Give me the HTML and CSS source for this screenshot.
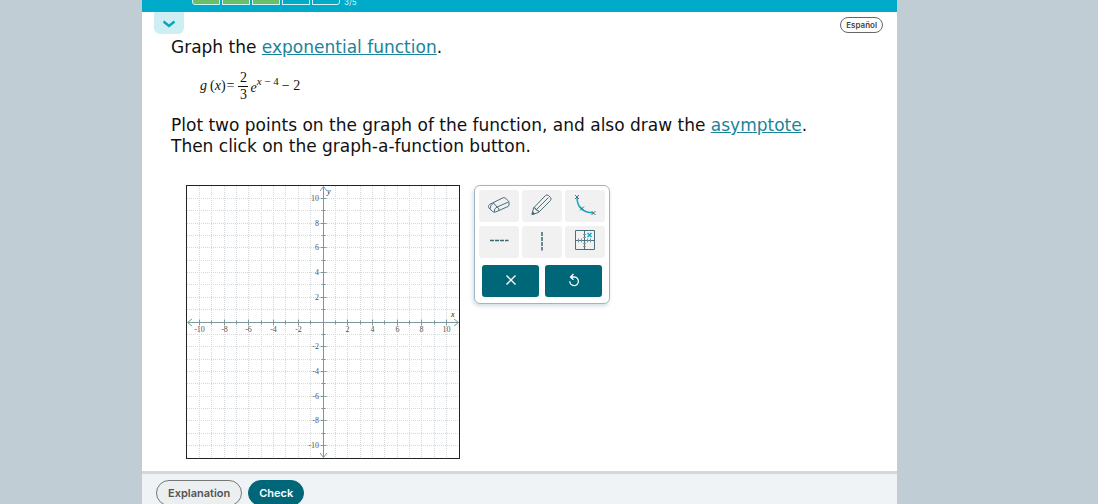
FILE: index.html
```
<!DOCTYPE html>
<html lang="en">
<head>
    <meta charset="UTF-8">
    <meta name="viewport" content="width=device-width, initial-scale=1.0">
    <title>Graphing an exponential function</title>
    <link rel="stylesheet" href="styles.css">
</head>
<body>
    <div class="app">
        <header class="topbar">
            <div class="progress">
                <span class="step done"></span>
                <span class="step done"></span>
                <span class="step done"></span>
                <span class="step"></span>
                <span class="step"></span>
            </div>
            <span class="count">3/5</span>
        </header>

        <main class="content">
            <div class="tabs">
                <button class="collapse" type="button" aria-label="Show details">
                    <svg width="14" height="8" viewBox="0 0 14 8"><path d="M1.500 1.500 L7 6 L12.500 1.500"/></svg>
                </button>
                <button class="language" type="button">Español</button>
            </div>

            <div class="question">
                <p>Graph the <a href="#exponential">exponential function</a>.</p>
                <div class="formula">
                    <i>g</i><span class="arg">(<i>x</i>)</span><span class="equals">=</span>
                    <span class="fraction"><span class="top">2</span><span>3</span></span>
                    <span class="power"><i>e</i><sup><i>x</i> − 4</sup></span>
                    <span class="rest">− 2</span>
                </div>
                <p>Plot two points on the graph of the function, and also draw the <a href="#asymptote">asymptote</a>.<br>
                Then click on the graph-a-function button.</p>
            </div>

            <div class="workspace">
                <svg class="graph" id="graph" width="274" height="274" viewBox="0 0 274 274" role="img" aria-label="Coordinate plane">
                    <g id="grid"></g>
                    <path class="axis" d="M2 137.500 H272 M137.500 2 V272"/>
                    <path class="axis" d="M6 134 L1.500 137.500 L6 141 M268 134 L272.500 137.500 L268 141 M134 6 L137.500 1.500 L141 6 M134 268 L137.500 272.500 L141 268"/>
                    <g id="ticks"></g>
                    <text class="name" x="141" y="9">y</text>
                    <text class="name" x="265" y="132">x</text>
                    <rect class="frame" x="0.500" y="0.500" width="273" height="273"/>
                </svg>

                <div class="toolbox">
                    <div class="tools">
                        <button type="button" aria-label="Eraser">
                            <svg width="24" height="24" viewBox="0 0 24 24">
                                <path d="M2.500 11.500 L15.500 5 Q17 4.300 18.200 5 L21.500 8 Q22 8.500 22 9.500 V12 Q22 13 21 13.500 L8.500 19 Q7 19.600 5.800 18.600 L2.800 16 Q1.500 15 1.500 13.500 Q1.500 12 2.500 11.500 Z"/>
                                <path d="M7.500 19 Q6.500 15.500 10 14 L21.500 9 M10 14 L6.500 10 M10 14 Q12 14.500 12 17.200 M3 16 Q3 12.500 6.500 10"/>
                            </svg>
                        </button>
                        <button type="button" aria-label="Pencil">
                            <svg width="24" height="24" viewBox="0 0 24 24">
                                <path d="M2 21.500 L3.500 15 L15.500 2.500 Q17 1.300 18.500 2.500 L20.500 4.500 Q21.800 6 20.500 7.500 L8.500 19.500 Z M3.500 15 Q6 14 6 17 Q9 16.500 8.500 19.500 M6 17 L18.500 4.500"/>
                                <path class="solid" d="M2 21.500 L2.600 18.800 L4.700 20.800 Z"/>
                            </svg>
                        </button>
                        <button type="button" aria-label="Curve">
                            <svg width="24" height="24" viewBox="0 0 24 24">
                                <path class="accent" d="M4 4 C4 15 10 19.500 20.500 20"/>
                                <path d="M2 2 L6 6 M6 2 L2 6 M7 13.500 L11 17.500 M11 13.500 L7 17.500 M18.500 18 L22.500 22 M22.500 18 L18.500 22"/>
                            </svg>
                        </button>
                        <button type="button" aria-label="Horizontal asymptote">
                            <svg width="24" height="24" viewBox="0 0 24 24"><path class="dash" d="M3 11.500 H21.500"/></svg>
                        </button>
                        <button type="button" aria-label="Vertical asymptote">
                            <svg width="24" height="24" viewBox="0 0 24 24"><path class="dash" d="M12 3 V21.500"/></svg>
                        </button>
                        <button type="button" aria-label="Graph a function">
                            <svg width="24" height="24" viewBox="0 0 24 24">
                                <path d="M2.500 1.500 H21.500 V20.500 H2.500 Z M2.500 11.500 H21.500 M11.500 1.500 V20.500"/>
                                <path class="thin" d="M5.500 9.500 V13.500 M8.500 9.500 V13.500 M14.500 9.500 V13.500 M17.500 9.500 V13.500 M10 5.500 H13 M10 8.500 H13 M10 14.500 H13 M10 17.500 H13"/>
                                <path class="accent" d="M14.500 4 L18.500 8 M18.500 4 L14.500 8"/>
                            </svg>
                        </button>
                    </div>
                    <div class="actions">
                        <button type="button" aria-label="Clear">
                            <svg width="16" height="16" viewBox="0 0 16 16"><path d="M3.500 2.500 L12.500 11.500 M12.500 2.500 L3.500 11.500"/></svg>
                        </button>
                        <button type="button" aria-label="Undo">
                            <svg width="16" height="16" viewBox="0 0 16 16"><path d="M4.500 4 H8.500 A4.300 4.300 0 1 1 3.800 8.300 M7.500 1 L4.500 4 L7.500 6.800"/></svg>
                        </button>
                    </div>
                </div>
            </div>
        </main>

        <footer class="footer">
            <button class="explanation" type="button">Explanation</button>
            <button class="check" type="button">Check</button>
        </footer>
    </div>

    <script>
        const center = 137.5;
        const unit = 12.35;
        let grid = '';
        let ticks = '';

        for (let n = -10; n <= 10; n++) {
            if (n === 0) continue;
            // half pixels keep the lines sharp
            const x = Math.floor(137 + n * unit) + 0.5;
            const y = Math.floor(137 - n * unit) + 0.5;
            grid += `<path class="line" d="M${x} 1 V273 M1 ${y} H273"/>`;

            // even ticks are longer and carry a number
            const size = n % 2 === 0 ? 3 : 2;
            ticks += `<path class="axis" d="M${x} ${center - size} V${center + size} M${center - size} ${y} H${center + size}"/>`;
            if (n % 2 === 0) {
                ticks += `<text class="number" x="${x}" y="147" text-anchor="middle">${n}</text>`;
                ticks += `<text class="number" x="133" y="${y + 2}" text-anchor="end">${n}</text>`;
            }
        }

        document.getElementById('grid').innerHTML = grid;
        document.getElementById('ticks').innerHTML = ticks;
    </script>
</body>
</html>
```
FILE: styles.css
```
* {
    box-sizing: border-box;
}
body {
    margin: 0;
    height: 100vh;
    overflow: hidden;
    background: #c0cdd4;
    font-family: Inter, "Liberation Sans", sans-serif;
    color: #111;
}
button {
    font-family: inherit;
    padding: 0;
    border: none;
    cursor: pointer;
}
svg {
    display: block;
    fill: none;
}
.app {
    display: flex;
    flex-direction: column;
    min-height: 100vh;
    margin: 0 201px 0 142px;
    background: #fff;
}
.topbar {
    display: flex;
    align-items: flex-end;
    gap: 4px;
    height: 12px;
    padding: 0 50px 7px;
    background: #00abc9;
}
.progress {
    display: flex;
    gap: 2px;
}
.step {
    width: 28px;
    height: 12px;
    border: 1px solid #d5f2f6;
}
.step:first-child {
    border-radius: 0 0 0 3px;
}
.step:last-child {
    border-radius: 0 0 3px 0;
}
.done {
    background: #6abf69;
}
.count {
    font-size: 8px;
    line-height: 5px;
    color: #d5f2f6;
}
.tabs {
    display: flex;
    justify-content: space-between;
    align-items: flex-start;
    padding: 0 14px 0 12px;
}
.collapse {
    display: flex;
    justify-content: center;
    align-items: center;
    width: 30px;
    height: 22px;
    padding-top: 2px;
    border-radius: 0 0 6px 6px;
    background: #cdeff4;
}
.collapse path {
    stroke: #0fa3bb;
    stroke-width: 2.5;
}
.language {
    margin-top: 5px;
    padding: 0 5px;
    border: 1px solid #666;
    border-radius: 8px;
    background: #fff;
    font-size: 8px;
    font-weight: 600;
    line-height: 14px;
    color: #444;
}
.question {
    padding: 3px 29px 0;
    font-family: Verdana, "DejaVu Sans", sans-serif;
    font-size: 17px;
    line-height: 21px;
}
.question p {
    margin: 0;
}
.question a {
    color: #1a8499;
}
.formula {
    display: flex;
    align-items: center;
    height: 34px;
    margin: 11px 0 12px 29px;
    font-family: "Liberation Serif", serif;
    font-size: 14px;
    line-height: 16px;
}
.arg {
    margin-left: 3px;
}
.equals {
    margin: 0 4px 0 1px;
}
.fraction {
    display: flex;
    flex-direction: column;
    width: 10px;
    text-align: center;
}
.top {
    border-bottom: 1px solid #111;
}
.power {
    margin-left: 2px;
}
.power sup {
    font-size: 11px;
    line-height: 8px;
    vertical-align: 7px;
}
.rest {
    margin-left: 3px;
}
.workspace {
    display: flex;
    align-items: flex-start;
    gap: 14px;
    padding: 28px 44px 12px;
}
.frame {
    stroke: #222;
}
.line {
    stroke: #d3d9db;
    stroke-dasharray: 1 1;
}
.axis {
    stroke: #7c989f;
}
.number {
    fill: #555;
    font: 8px "Liberation Serif", serif;
}
.name {
    fill: #222;
    font: italic 8px "Liberation Serif", serif;
}
.toolbox {
    padding: 4px;
    border: 1px solid #a3b3c2;
    border-radius: 6px;
    box-shadow: -1px 2px 4px #cfdbe2;
}
.tools {
    display: grid;
    grid-template-columns: repeat(3, 40px);
    gap: 4px 3px;
}
.tools button {
    display: flex;
    justify-content: center;
    align-items: center;
    height: 32px;
    padding-bottom: 2px;
    border-radius: 3px;
    background: #f1f1f1;
}
.tools path {
    stroke: #4b6f7c;
}
.tools .accent {
    stroke: #16aabf;
    stroke-width: 1.5;
}
.tools .thin {
    stroke: #7f99a3;
}
.tools .solid {
    fill: #4b6f7c;
}
.tools .dash {
    stroke: #3f6472;
    stroke-width: 1.5;
    stroke-dasharray: 4 1;
}
.actions {
    display: flex;
    gap: 6px;
    padding: 7px 3px 2px;
}
.actions button {
    display: flex;
    flex: 1;
    justify-content: center;
    align-items: center;
    height: 32px;
    border-radius: 3px;
    background: #006778;
}
.actions path {
    stroke: #fff;
    stroke-width: 1.3;
}
.footer {
    display: flex;
    flex: 1;
    align-items: flex-start;
    gap: 6px;
    padding: 6px 14px 0;
    border-top: 3px solid #d0d9de;
    background: #eff3f5;
}
.footer button {
    padding: 0 11px;
    border: 1px solid #006778;
    border-radius: 13px;
    font-size: 11px;
    font-weight: 600;
    line-height: 24px;
}
.footer .explanation {
    border-color: #777;
    background: #eceff0;
    color: #555;
}
.footer .check {
    padding: 0 10px;
    background: #006778;
    color: #fff;
}
```
